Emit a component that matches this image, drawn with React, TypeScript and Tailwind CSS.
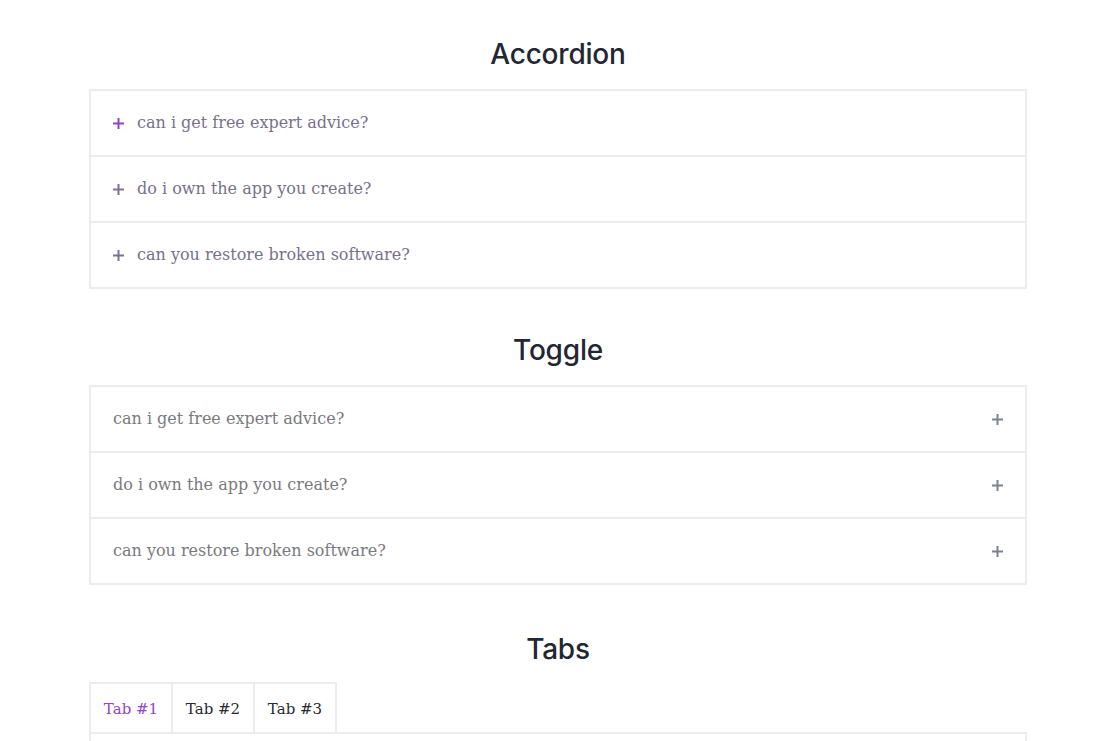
import React from "react";

const serif = { fontFamily: '"DejaVu Serif", "Liberation Serif", serif' };
const sans = { fontFamily: 'Inter, "Open Sans", Roboto, sans-serif' };

function Plus({ color }: { color: string }) {
  return (
    <svg width="11" height="11" viewBox="0 0 11 11" className="shrink-0">
      <rect x="0" y="4.5" width="11" height="2" fill={color} />
      <rect x="4.5" y="0" width="2" height="11" fill={color} />
    </svg>
  );
}

const questions = [
  "can i get free expert advice?",
  "do i own the app you create?",
  "can you restore broken software?",
];

function Heading({ children }: { children: React.ReactNode }) {
  return (
    <h2
      className="h-9 flex items-center justify-center text-[28px] font-medium text-[#232733] tracking-[-0.2px]"
      style={sans}
    >
      {children}
    </h2>
  );
}

export default function App() {
  return (
    <div className="w-full h-[741px] bg-white overflow-hidden">
      <div className="w-[938px] ml-[89px] pt-[36px]">
        <Heading>Accordion</Heading>
        <div className="mt-[17px] border-2 border-[#ebebf0]">
          {questions.map((q, i) => (
            <div
              key={q}
              className={`flex items-center pl-[22px] gap-[13px] ${
                i > 0 ? "h-[66px] border-t-2 border-[#ebebf0]" : "h-[64px]"
              }`}
            >
              <Plus color={i === 0 ? "#8f44c4" : "#7d7590"} />
              <span className="text-[16px] text-[#77718a]" style={serif}>
                {q}
              </span>
            </div>
          ))}
        </div>

        <div className="mt-[43px]">
          <Heading>Toggle</Heading>
        </div>
        <div className="mt-[17px] border-2 border-[#ebebf0]">
          {questions.map((q, i) => (
            <div
              key={q}
              className={`flex items-center justify-between pl-[22px] pr-[22px] ${
                i > 0 ? "h-[66px] border-t-2 border-[#ebebf0]" : "h-[64px]"
              }`}
            >
              <span className="text-[16px] text-[#7a7a7e]" style={serif}>
                {q}
              </span>
              <Plus color="#7d8390" />
            </div>
          ))}
        </div>

        <div className="mt-[46px]">
          <Heading>Tabs</Heading>
        </div>
        <div className="mt-[15px]">
          <div className="flex">
            {["Tab #1", "Tab #2", "Tab #3"].map((t, i) => (
              <div
                key={t}
                className={`h-[50px] w-[84px] pt-[3px] flex items-center justify-center border-2 border-b-0 border-[#ebebf0] ${
                  i > 0 ? "-ml-[2px]" : ""
                } ${i === 0 ? "text-[#9245c9]" : "text-[#2a2a33]"} text-[15px]`}
                style={serif}
              >
                {t}
              </div>
            ))}
          </div>
          <div className="h-[60px] border-2 border-[#ebebf0]"></div>
        </div>
      </div>
    </div>
  );
}
